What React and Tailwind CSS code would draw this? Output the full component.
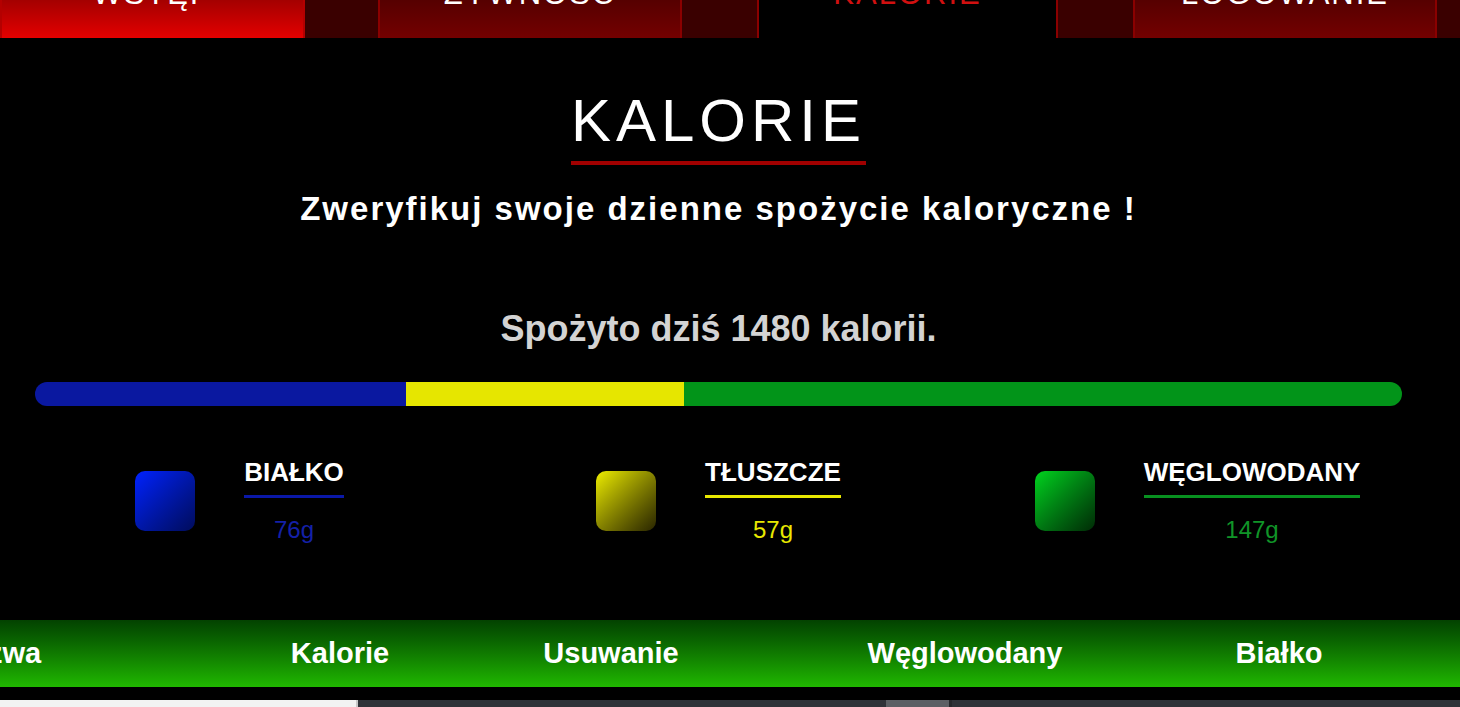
const tabs = [
  { label: 'WSTĘP', kind: 'hot', w: 'w-[305px]', ml: 'ml-0' },
  { label: 'ŻYWNOŚĆ', kind: 'dim', w: 'w-[304px]', ml: 'ml-[73px]' },
  { label: 'KALORIE', kind: 'active', w: 'w-[301px]', ml: 'ml-[75px]' },
  { label: 'LOGOWANIE', kind: 'dim', w: 'w-[304px]', ml: 'ml-[75px]' },
];

const tabStyle = {
  hot: 'bg-gradient-to-b from-[#a40000] to-[#e40000] border-[#b40000] text-white',
  dim: 'bg-gradient-to-b from-[#560000] to-[#740000] border-[#8a0000] text-white',
  active: 'bg-black border-[#8a0000] text-[#d01010]',
};

const macros = [
  {
    name: 'BIAŁKO',
    grams: 76,
    box: 'from-[#0022ff] to-[#000c5c]',
    line: 'border-[#0a18a8]',
    text: 'text-[#1420a8]',
  },
  {
    name: 'TŁUSZCZE',
    grams: 57,
    box: 'from-[#eeee00] to-[#2a2600]',
    line: 'border-[#e8e800]',
    text: 'text-[#e8e800]',
  },
  {
    name: 'WĘGLOWODANY',
    grams: 147,
    box: 'from-[#00d41e] to-[#002c06]',
    line: 'border-[#089020]',
    text: 'text-[#109428]',
  },
];

const columns = [
  { label: 'Nazwa', w: 'w-[344px]' },
  { label: 'Kalorie', w: 'w-[344px]' },
  { label: 'Usuwanie', w: 'w-[198px]' },
  { label: 'Węglowodany', w: 'w-[510px]' },
  { label: 'Białko', w: 'w-[118px]' },
];

export default function App() {
  const total = macros.reduce((s, m) => s + m.grams, 0);

  return (
    <div className="w-[1460px] h-[707px] overflow-hidden bg-black font-['Liberation_Sans',Arial,sans-serif]">
      {/* Top nav, scrolled so only the bottom of the labels shows */}
      <nav className="h-[38px] flex bg-[#3a0000]">
        {tabs.map((t) => (
          <div
            key={t.label}
            className={`${t.w} ${t.ml} h-full shrink-0 overflow-hidden border-x-2 ${tabStyle[t.kind]}`}
          >
            <div className="-mt-[22px] text-center text-[31px] leading-none tracking-[2px]">
              {t.label}
            </div>
          </div>
        ))}
      </nav>

      {/* Main content */}
      <main className="w-[1437px] flex flex-col items-center">
        <h1 className="mt-[48px] border-b-4 border-[#a00000] pb-[6px] text-[60px] font-normal leading-[normal] tracking-[5px] text-white">
          KALORIE
        </h1>

        <p className="mt-[25px] text-[33px] font-bold leading-[normal] tracking-[2px] text-white">
          Zweryfikuj swoje dzienne spożycie kaloryczne !
        </p>

        <p className="mt-[80px] text-[36px] font-bold leading-[normal] text-[#d3d3d3]">
          Spożyto dziś 1480 kalorii.
        </p>

        {/* Progress bar */}
        <div className="mt-[32px] w-[1367px] h-[24px] flex rounded-full overflow-hidden">
          <div className="bg-[#0a18a0]" style={{ width: `${(macros[0].grams / total) * 100}%` }} />
          <div className="bg-[#e6e600]" style={{ width: `${(macros[1].grams / total) * 100}%` }} />
          <div className="bg-[#029419]" style={{ width: `${(macros[2].grams / total) * 100}%` }} />
        </div>

        {/* Legend */}
        <div className="mt-[51px] w-full grid grid-cols-3">
          {macros.map((m) => (
            <div key={m.name} className="flex items-center justify-center gap-[49px]">
              <div className={`w-[60px] h-[60px] rounded-[10px] bg-gradient-to-br ${m.box}`} />
              <div className="flex flex-col items-center">
                <div className={`border-b-[3px] ${m.line} pb-[8px] text-[26px] font-bold leading-[30px] text-white`}>
                  {m.name}
                </div>
                <div className={`mt-[18px] text-[24px] leading-[normal] ${m.text}`}>{m.grams}g</div>
              </div>
            </div>
          ))}
        </div>
      </main>

      {/* Table header */}
      <div className="mt-[76px] h-[67px] w-[1460px] flex items-center bg-gradient-to-b from-[#034200] to-[#20b800]">
        <div className="flex -ml-[176px]">
          {columns.map((c) => (
            <div key={c.label} className={`${c.w} shrink-0 text-center text-[29px] font-bold leading-[normal] text-white`}>
              {c.label}
            </div>
          ))}
        </div>
      </div>

      <div className="mt-[13px] h-[7px] flex">
        <div className="w-[358px] bg-[#f2f2f2] border-r-2 border-[#c8c8c8]" />
        <div className="w-[528px] bg-[#2f3238]" />
        <div className="w-[66px] bg-[#5c5f64] border-r-[3px] border-[#26282c]" />
        <div className="flex-1 bg-[#2f3238]" />
      </div>
    </div>
  );
}
